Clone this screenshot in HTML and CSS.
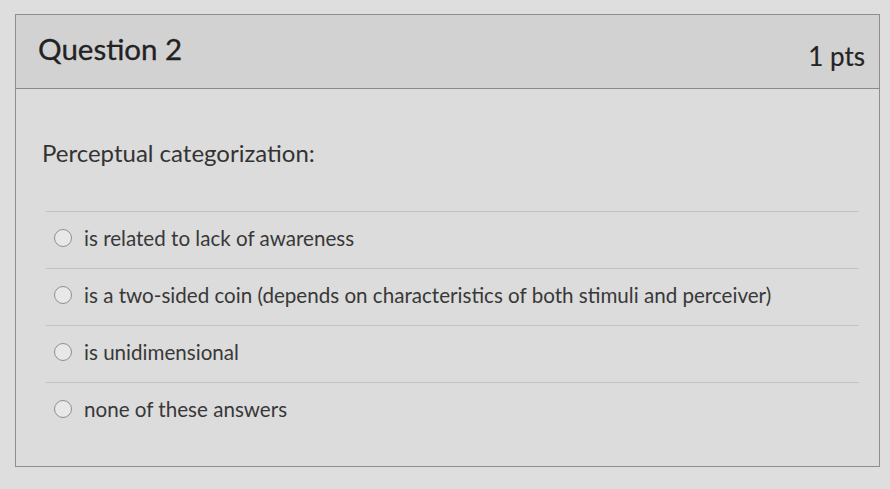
FILE: index.html
```html
<!DOCTYPE html>
<html>
<head>
<meta charset="utf-8">
<link rel="stylesheet" href="styles.css">
</head>
<body>
<div class="quiz">
  <div class="header">
    <h2 class="title">Question 2</h2>
    <div class="pts">1 pts</div>
  </div>
  <div class="content">
    <p class="question">Perceptual categorization:</p>
    <div class="answers">
      <label class="answer"><span class="radio"></span><span class="label">is related to lack of awareness</span></label>
      <label class="answer"><span class="radio"></span><span class="label">is a two-sided coin (depends on characteristics of both stimuli and perceiver)</span></label>
      <label class="answer"><span class="radio"></span><span class="label">is unidimensional</span></label>
      <label class="answer last"><span class="radio"></span><span class="label">none of these answers</span></label>
    </div>
  </div>
</div>
</body>
</html>
```

FILE: styles.css
```css
html, body {
  margin: 0;
  padding: 0;
}
body {
  background: #dedede;
  font-family: Lato, "Noto Sans", sans-serif;
  color: #2a2a2a;
  width: 890px;
  height: 489px;
  overflow: hidden;
}
.quiz {
  margin: 14px 0 0 15px;
  width: 865px;
  height: 453px;
  border: 1px solid #8e8e8e;
  box-sizing: border-box;
  background: #dcdcdc;
}
.header {
  height: 74px;
  background: #d2d2d2;
  border-bottom: 1px solid #8a8a8a;
  display: flex;
  align-items: center;
  justify-content: space-between;
  padding: 0 14px 0 22px;
  box-sizing: border-box;
}
.title {
  margin: 0;
  font-size: 29.5px;
  font-weight: 400;
  color: #222;
  position: relative;
  top: -3px;
  -webkit-text-stroke: 0.3px #222;
}
.pts {
  font-size: 26px;
  color: #242424;
  position: relative;
  top: 4px;
  -webkit-text-stroke: 0.2px #242424;
}
.content {
  padding: 49px 20px 0 26px;
}
.question {
  margin: 0;
  font-size: 24px;
  color: #333;
  line-height: 30px;
}
.answers {
  margin-top: 43px;
  margin-left: 4px;
}
.answer {
  display: flex;
  align-items: center;
  height: 57px;
  border-top: 1px solid #c2c2c2;
  font-size: 20.6px;
  color: #383838;
  padding-left: 8px;
  padding-bottom: 5px;
  box-sizing: border-box;
}
.radio {
  width: 18px;
  height: 18px;
  border: 1.5px solid #909090;
  border-radius: 50%;
  background: #e8e8e8;
  margin-right: 12px;
  box-sizing: border-box;
  flex: none;
}
```
